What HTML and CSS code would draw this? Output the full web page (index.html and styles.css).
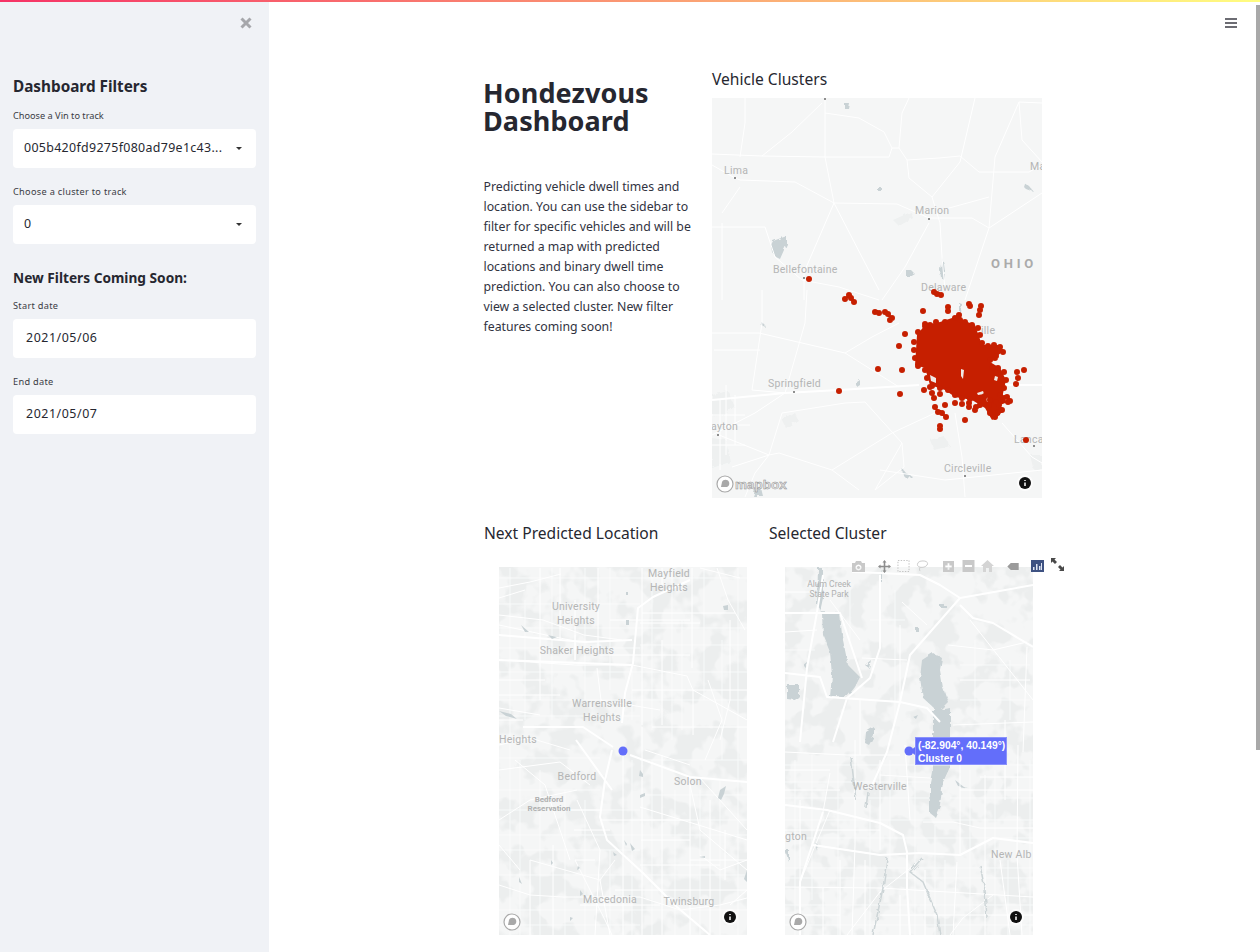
FILE: index.html
```html
<!DOCTYPE html>
<html lang="en">
<head>
<meta charset="utf-8">
<title>Hondezvous Dashboard</title>
<link rel="stylesheet" href="styles.css">
</head>
<body>
<svg class="defs" width="0" height="0">
  <defs>
    <filter id="mottle" x="0" y="0" width="100%" height="100%" color-interpolation-filters="sRGB">
      <feTurbulence type="fractalNoise" baseFrequency=".04" numOctaves="3" seed="7"/>
      <feColorMatrix type="matrix" values="0 0 0 0 .925  0 0 0 0 .933  0 0 0 0 .933  9 0 0 0 -4.300"/>
    </filter>
    <filter id="mottle2" x="0" y="0" width="100%" height="100%" color-interpolation-filters="sRGB">
      <feTurbulence type="fractalNoise" baseFrequency=".045" numOctaves="3" seed="21"/>
      <feColorMatrix type="matrix" values="0 0 0 0 .925  0 0 0 0 .933  0 0 0 0 .933  9 0 0 0 -4.400"/>
    </filter>
    <filter id="rough" x="-10%" y="-10%" width="120%" height="120%">
      <feTurbulence type="fractalNoise" baseFrequency=".18" numOctaves="2" seed="4" result="n"/>
      <feDisplacementMap in="SourceGraphic" in2="n" scale="5"/>
    </filter>
  </defs>
</svg>
<div class="topbar"></div>
<div class="app">
  <aside class="sidebar">
    <div class="close-row">
      <svg class="close" viewBox="0 0 12 12"><path d="M1.5 1.5l9 9M10.5 1.5l-9 9"/></svg>
    </div>
    <h3 class="side-head">Dashboard Filters</h3>
    <label class="field-label">Choose a Vin to track</label>
    <div class="select"><span>005b420fd9275f080ad79e1c43...</span><i class="caret"></i></div>
    <label class="field-label wide">Choose a cluster to track</label>
    <div class="select"><span>0</span><i class="caret"></i></div>
    <h3 class="side-head second">New Filters Coming Soon:</h3>
    <label class="field-label wide">Start date</label>
    <div class="date">2021/05/06</div>
    <label class="field-label wide">End date</label>
    <div class="date">2021/05/07</div>
  </aside>
  <main class="main">
    <svg class="menu" viewBox="0 0 12 10"><path d="M0 1h12M0 5h12M0 9h12"/></svg>
    <div class="scrollthumb"></div>
    <section class="row-one">
      <div class="intro">
        <h1>Hondezvous<br>Dashboard</h1>
        <p>Predicting vehicle dwell times and<br>location. You can use the sidebar to<br>filter for specific vehicles and will be<br>returned a map with predicted<br>locations and binary dwell time<br>prediction. You can also choose to<br>view a selected cluster. New filter<br>features coming soon!</p>
      </div>
      <div class="cluster-col">
        <h2>Vehicle Clusters</h2>
        <svg class="map map-large" viewBox="712 98 330 400">
          <rect class="land" x="712" y="98" width="330" height="400"/>
          <g class="patch rough">
            <path d="M893 220l18-8 2 6-14 8zM712 395l16-4 6 14-14 12-8-2zM930 440l14-4 6 10-16 4zM1030 455l12 0 0 14-8 2zM782 420l12-8 4 8-12 8zM712 438l14 2 4 22-18 6z"/>
          </g>
          <g class="water rough">
            <path d="M773 241l8-3 6-2 0 8-3 6-4 9-4-2-4-5-1-7zM906 270h5l3 3-5 3h-3zM942 258l2 6 1 8-1 8-3-2-1-8zM844 103h5l-1 5h-4zM878 187h3v4h-3zM1024 183l6 4 4 5-8-3-3-3zM761 322l4 3 1 3-5-3zM857 382l3-2 0 5-3 2zM902 468l4 5 6 3-4 4-5-5zM755 490l6-2 2 8h-10zM959 303l3 1-1 9-2 1z"/>
          </g>
          <g class="rd">
            <path d="M825 98V157L834 203L879 290M712 154L762 156L825 157L889 157L892 148H899L907 160L939 158L960 156L979 172L1029 172L1042 165M712 165L735 178L740 180L795 182L834 203L897 204L929 218L972 218L989 228L1042 193M745 98V123L740 157M762 156L792 132L822 103M825 113L859 118L884 132L892 148M899 148L902 113L909 98M907 160L909 178L932 197L940 223L942 257L945 290M932 197L960 162L975 98M712 227H765L775 257L802 280L839 287L879 300M722 223V300M740 187L722 213M804 270V300M929 223L905 267L882 300M989 228L995 157L1019 102L1042 103M1019 102L1022 140L1042 162M989 197L942 210M965 300L989 228M834 203L805 270"/>
            <path d="M712 333H759L845 353L872 337L899 323M845 353L899 387M785 393L805 323L807 290M785 393L752 390L762 323L762 290M712 435L755 413L785 393M719 435L769 455L779 453L832 470L859 490M769 455L782 413L845 403L865 402L902 443L875 490M769 455L732 467M769 455L755 473L745 497M832 470L892 433L935 413M902 443L904 467L875 490M955 413L962 457L965 497M1002 423L1032 457L1042 463M880 470L945 480L1042 470M714 350H760M720 400V470M706 415H745M726 385V455M735 395V445M712 425H750M712 445H745"/>
          </g>
          <g class="rd rd-wide">
            <path d="M712 400L785 393L839 390L919 385M1042 385H999"/>
          </g>
          <g class="town">
            <circle cx="735" cy="178" r="1"/><circle cx="929" cy="219" r="1"/><circle cx="804" cy="278" r="1"/><circle cx="794" cy="392" r="1"/><circle cx="718" cy="435" r="1"/><circle cx="965" cy="476" r="1"/><circle cx="825" cy="99" r="1"/><circle cx="1034" cy="446" r="1"/>
          </g>
          <g class="lbl">
            <text x="724" y="174">Lima</text>
            <text x="915" y="214">Marion</text>
            <text x="1030" y="170">Ma</text>
            <text x="773" y="273">Bellefontaine</text>
            <text x="921" y="291">Delaware</text>
            <text x="768" y="387">Springfield</text>
            <text x="711" y="430">ayton</text>
            <text x="944" y="472">Circleville</text>
            <text x="1014" y="443">Lancas</text>
            <text x="981" y="334">ille</text>
            <text class="state" x="991" y="268">OHIO</text>
          </g>
          <g class="dots">
            <path class="blob" d="M917 335L925 325L940 322L955 317L975 325L982 345L1000 345L1002 352L990 362L1000 368L1006 380L1002 398L1008 402L1000 405L1000 415L992 420L985 408L972 400L955 397L945 390L930 385L925 368L915 365Z"/>
            <path class="hole" d="M961 369l3 1-1 9-2-3zM930 375l6 3 0 5-5-2zM977 393l6-2 1 3-6 1zM986 396l5 5-4 1zM995 376l3 1-1 4-3-1z"/>
            <path class="dot" d="M809 279h0M849 295h0M845 299h0M854 302h0M851 298h0M875 312h0M879 313h0M885 312h0M888 314h0M892 318h0M890 320h0M905 334h0M899 346h0M878 369h0M902 370h0M839 391h0M900 394h0M923 311h0M925 324h0M948 307h0M948 311h0M969 304h0M970 306h0M980 310h0M979 315h0M981 306h0M959 315h0M934 292h0M937 294h0M941 295h0M940 394h0M930 387h0M932 393h0M924 390h0M934 398h0M935 407h0M945 405h0M942 413h0M946 417h0M938 412h0M940 429h0M940 426h0M965 420h0M955 403h0M962 404h0M969 403h0M969 407h0M975 410h0M976 407h0M989 405h0M999 405h0M990 413h0M995 417h0M1002 410h0M998 412h0M980 405h0M1024 370h0M1017 372h0M1018 378h0M1016 384h0M1010 401h0M1007 397h0M995 358h0M918 332h0M925 326h0M930 325h0M936 322h0M945 322h0M955 318h0M960 320h0M965 322h0M972 325h0M978 328h0M980 335h0M982 343h0M988 346h0M994 345h0M1000 347h0M1003 352h0M996 356h0M990 360h0M992 368h0M998 368h0M1004 372h0M1006 380h0M1004 388h0M1000 395h0M1003 398h0M1008 402h0M996 402h0M990 400h0M985 396h0M978 398h0M970 399h0M962 398h0M955 395h0M948 390h0M940 388h0M932 386h0M927 378h0M925 370h0M918 366h0M915 358h0M914 350h0M914 342h0"/>
          </g>
          <circle class="lead" cx="1026" cy="440" r="3"/>
          <g class="logo">
            <circle class="logo-ring" cx="725" cy="484" r="8"/>
            <path class="logo-mark" d="M721 487l1-5c1-3 6-3 7 0s-1 5-3 5z"/>
            <text class="logo-word" x="735" y="489">mapbox</text>
          </g>
          <circle class="info-halo" cx="1025" cy="483" r="8"/>
          <circle class="info" cx="1025" cy="483" r="6"/>
          <path class="info-i" d="M1025 480v1M1025 482.5v3.500"/>
        </svg>
      </div>
    </section>
    <section class="row-two">
      <div class="map-col">
        <h2>Next Predicted Location</h2>
        <svg class="map map-small" viewBox="499 567 248 368">
          <rect class="land" x="499" y="567" width="248" height="368"/>
          <rect x="499" y="567" width="248" height="368" class="mottle-a"/>
          <g class="rd rd-minor">
            <path d="M510 568V935M525 600V720M552 568V720M585 568V700M610 568V690M632 670V720M652 568V730M672 568V740M682 620V730M704 568V700M722 640V760M738 568V935M520 760V935M540 770V935M565 790V935M585 800V935M610 850V935M632 760V935M652 760V935M675 790V935M700 790V935M720 780V935M499 578H747M499 604H640M499 628H747M499 648H640M640 645H747M499 672H747M499 700H747M499 716H640M499 758H600M640 760H747M499 790H600M640 795H747M499 810H640M640 820H747M499 835H747M499 850H640M499 875H747M499 910H747M499 925H640"/>
          </g>
          <g class="rd">
            <path d="M499 588L530 582L561 574M499 598L525 590M499 615L543 620L584 635L622 640M499 625L560 638L580 642M499 660L575 665L632 665M499 680H545M499 695H560M499 708L540 715M499 720H523M540 568V700M560 568V640M575 600V660M598 568V650M597 668L601 700M642 568V725M662 568V590M662 640V725M692 568V668M717 568L728 600L745 630M730 620V700L720 740M700 568L740 578M642 613H735M610 620H690M600 655H690M632 665L687 676L693 690L747 720M632 690L747 690M652 727L747 727M600 700L660 710M575 635V660M640 623H700M693 690V735M708 680L722 720L705 760M499 745L530 738L570 750M499 770L560 762L590 785M515 760L545 785L570 860M499 820L530 800L577 790M530 860V935M553 845V935M577 800L600 850L595 935M574 830H610M575 860H595M623 750V935M642 727V935M662 755V935M690 777V935M690 860H747M641 840H690M640 865H720M615 890H747M580 905H660M689 780L700 830L747 870M699 777L747 830M640 807L747 840M575 860L605 920L612 935M615 860L600 880L610 935M499 885L530 895L563 897H640L680 910L720 905L747 898M530 860L600 880M700 855L720 870L747 860M645 750L690 765M600 820H690M710 800V935M725 830V880M560 810H600M499 845L520 870M730 905L747 890"/>
          </g>
          <g class="rd rd-wide">
            <path d="M690 580L653 597L638 608L633 663L625 693L622 723M499 635L585 642L632 640M499 660L632 665M523 727L583 727L613 747M612 750L605 780L600 817L607 840L643 873L677 907L710 935M630 755L690 777L747 782M576 740L612 790"/>
          </g>
          <g class="water">
            <path d="M723 606l5-1 0 5-4 0zM626 592l2 0 0 3-2 0zM626 620l3 0 0 5-3 0zM521 625l8 7-4 0zM548 635l9 2-5 2zM499 711l12 3 6 5-11-3zM640 770l3 4 0 3-4-1zM640 795l5-2 0 3-5 2zM720 790l6-4-2 8-3 6-3-2zM624 840l3 4-1 2zM630 843l5 6-3 2zM613 852l4 3-3 1zM551 860l2 3-2 2zM578 866l2 2-3 2zM699 857l6-1 0 2zM747 870v12l-3-3zM519 877l3 7-3-2zM580 890l3 4-3 2zM570 917l3 1-3 3z"/>
          </g>
          <g class="lbl">
            <text class="mid" x="669" y="577">Mayfield</text>
            <text class="mid" x="669" y="591">Heights</text>
            <text class="mid" x="576" y="610">University</text>
            <text class="mid" x="576" y="624">Heights</text>
            <text class="mid" x="577" y="654">Shaker Heights</text>
            <text class="mid" x="602" y="707">Warrensville</text>
            <text class="mid" x="602" y="721">Heights</text>
            <text x="499" y="743">Heights</text>
            <text class="mid" x="577" y="780">Bedford</text>
            <text class="mid small" x="549" y="802">Bedford</text>
            <text class="mid small" x="549" y="811">Reservation</text>
            <text class="mid" x="688" y="785">Solon</text>
            <text class="mid" x="610" y="903">Macedonia</text>
            <text class="mid" x="689" y="905">Twinsburg</text>
          </g>
          <circle class="pt" cx="623" cy="751" r="4.5"/>
          <circle class="logo-ring" cx="512" cy="922" r="8"/>
          <path class="logo-mark" d="M508 925l1-5c1-3 6-3 7 0s-1 5-3 5z"/>
          <circle class="info-halo" cx="730" cy="917" r="8"/>
          <circle class="info" cx="730" cy="917" r="6"/>
          <path class="info-i" d="M730 914v1M730 916.5v3.500"/>
        </svg>
      </div>
      <div class="map-col cluster-map">
        <h2>Selected Cluster</h2>
        <svg class="map map-small" viewBox="785 567 248 368">
          <rect class="land" x="785" y="567" width="248" height="368"/>
          <rect x="785" y="567" width="248" height="368" class="mottle-b"/>
          <g class="water rough">
            <path d="M818 568L823 568L823 598L820 612L840 613L842 635L848 665L860 677L855 687L847 697L830 697L832 675L830 652L823 635L822 613L817 605Z"/>
            <path d="M922 660L933 653L942 658L940 670L943 688L948 702L940 710L950 708L950 767L943 782L940 805L935 817L930 813L930 782L933 767L933 707L923 698L920 678Z"/>
            <path d="M787 685h12v11l-4 4-8-1zM866 732l8-5 0 9-5 9-4-2zM913 717l5-2-2 4zM882 568v14l-2 0zM936 744l8-6-2 6zM865 665l6-5-2 8zM803 665l4-3-1 6zM785 850l4 0 0 12zM815 843l3 0-1 8zM940 605l6 0 0 3-6 0zM915 627l3 0 0 4-3 0zM955 780l8 6 5 2-10-2z"/>
          </g>
          <g class="rd rd-minor">
            <path d="M795 760V935M812 755V900M838 760V935M870 800V935M890 760V860M915 740V935M935 825V935M945 860V935M970 770V935M995 770V935M1008 860V935M1030 760V935M785 765H1033M785 782H930M785 798H930M950 798H1033M785 820H1033M785 838H1033M785 868H1033M785 878H1033M785 905H1033M785 925H1033M850 580V640M895 590V720M975 640V720M1010 660V720M785 650H815M870 620H905M960 665H1030M960 700H1030"/>
          </g>
          <g class="rd">
            <path d="M785 632L817 630M902 602L927 625M948 645L993 650L1027 642M862 658L907 660M953 725L1033 722M880 823L903 835M855 845L852 935M813 845L880 855M830 773L823 812M923 822H953L980 828H1033M980 777H1033M930 778L880 775M785 752L847 755L900 755M957 862L953 935M785 887L880 888L1033 897M993 895L963 918L950 935M923 858L880 892L847 935M1018 745L1017 855L1022 935M823 887V935M785 770H830M785 790H840M785 830H880M830 810L800 882M855 740V845M880 760V850M905 745L910 820M960 740V855M985 775V935M1005 720V800M840 860V935M865 860V935M900 895V935M925 870V935M800 800V935M785 915H840M880 915H1033M960 790H1033M1000 860L1010 935M830 600L860 640M785 592H815M900 625V700M970 620L1033 700M960 680H1030M860 700V755M1027 647L1023 752"/>
          </g>
          <g class="rd rd-wide">
            <path d="M852 572L880 573L920 575L940 585L960 598L1033 585M960 598L910 655L900 702L887 752M960 605L973 618L993 623L1033 647M880 575L880 648L870 678L847 698L833 742M785 613H823H840L862 678M823 575L817 612L807 668L800 742M785 673L820 677L827 697L900 702L927 708L940 722M785 805L827 810L880 823L903 835L907 852L907 888L910 935M813 845L880 855L920 853L960 855L993 838L1033 843M823 812L800 882L800 935M887 752L870 790"/>
          </g>
          <g class="river rough">
            <path d="M868 792L866 808M887 858L883 888L873 935M922 858L910 872L923 882L937 915L940 935M980 865L985 890L987 918M851 757L856 800"/>
          </g>
          <g class="lbl">
            <text class="mid small light" x="829" y="587">Alum Creek</text>
            <text class="mid small light" x="829" y="597">State Park</text>
            <text class="mid" x="880" y="790">Westerville</text>
            <text x="785" y="840">gton</text>
            <text x="991" y="858">New Alb</text>
          </g>
          <circle class="logo-ring" cx="798" cy="922" r="8"/>
          <path class="logo-mark" d="M794 925l1-5c1-3 6-3 7 0s-1 5-3 5z"/>
          <circle class="info-halo" cx="1016" cy="917" r="8"/>
          <circle class="info" cx="1016" cy="917" r="6"/>
          <path class="info-i" d="M1016 914v1M1016 916.5v3.500"/>
          <circle class="pt" cx="909" cy="751" r="4.5"/>
        </svg>
        <div class="hover-tip">(-82.904°, 40.149°)<br>Cluster 0</div>
        <div class="modebar">
          <svg viewBox="0 0 13 12" class="mb-icon"><path d="M4 1h5l1 2h3v9H0V3h3zM6.500 4.500a3 3 0 1 0 .01 0zM6.500 6a1.500 1.500 0 1 1-.01 0z" fill-rule="evenodd"/></svg>
          <svg viewBox="0 0 13 13" class="mb-icon mb-dark"><path d="M6.500 0l2 2.500H7.300V5.700h3.200V4.500l2.500 2-2.500 2V7.300H7.300v3.200h1.200l-2 2.500-2-2.500h1.200V7.300H2.500v1.200L0 6.500l2.500-2v1.200h3.200V2.500H4.500z"/></svg>
          <svg viewBox="0 0 13 13" class="mb-icon mb-box"><rect x=".5" y=".5" width="12" height="12"/></svg>
          <svg viewBox="0 0 13 13" class="mb-icon mb-lasso"><path d="M1 5c0-3 3-4 6-4s5 1 5 3-3 4-6 4c-3 0-5-1-5-3zM4 8c-1 1-1 3 0 4"/></svg>
          <svg viewBox="0 0 12 12" class="mb-icon mb-gap"><path d="M0 0h12v12H0zM5 2.500v2.500H2.500v2H5v2.500h2V7h2.500V5H7V2.500z" fill-rule="evenodd"/></svg>
          <svg viewBox="0 0 12 12" class="mb-icon"><path d="M0 0h12v12H0zM2.500 5v2h7V5z" fill-rule="evenodd"/></svg>
          <svg viewBox="0 0 13 12" class="mb-icon mb-home"><path d="M6.500 0L13 6h-2v6H8V8H5v4H2V6H0z"/></svg>
          <svg viewBox="0 0 13 8" class="mb-icon mb-tag"><path d="M4 0h9v8H4L0 4z"/></svg>
          <span class="mb-logo"><svg viewBox="0 0 12 12"><path d="M2 7h1.500v3H2zM5 4h1.500v6H5zM8 6h1.500v4H8zM10 3h1v7h-1z"/></svg></span>
          <svg viewBox="0 0 13 13" class="mb-expand"><path d="M0 0h5L3.500 1.500 6 4 4 6 1.500 3.500 0 5zM13 13H8l1.500-1.500L7 9l2-2 2.500 2.500L13 8z"/></svg>
        </div>
      </div>
    </section>
  </main>
</div>
</body>
</html>
```
FILE: styles.css
```css
* { box-sizing: border-box; }
html, body { margin: 0; height: 952px; overflow: hidden; background: #fff; }
body { font-family: "Noto Sans", "Open Sans", sans-serif; color: #262730; }
.defs { position: absolute; }

.topbar { position: absolute; left: 0; top: 0; width: 100%; height: 2px; z-index: 5; background: linear-gradient(90deg, #f63366, #fffd80); }
.app { display: flex; height: 952px; }

.sidebar { width: 269px; flex: none; background: #f0f2f6; padding: 0 13px; }
.close-row { display: flex; justify-content: flex-end; height: 76px; padding: 17px 4px 0 0; }
.close { width: 12px; height: 12px; fill: none; stroke: #a6a7ab; stroke-width: 3; }
.side-head { margin: 0 0 14px; font-size: 15.300px; line-height: 20px; font-weight: 700; }
.side-head.second { margin: 24px 0 12px; font-size: 13.700px; }
.field-label { display: block; font-size: 9.200px; line-height: 12px; margin-bottom: 7px; color: #3a3b44; }
.field-label.wide { letter-spacing: .3px; }
.select, .date { background: #fff; height: 39px; border-radius: 4px; display: flex; align-items: center; font-size: 12.400px; margin-bottom: 18px; }
.select { padding: 0 13px 0 11px; justify-content: space-between; letter-spacing: .33px; }
.select span { white-space: nowrap; margin-top: -2px; }
.date { padding: 0 0 2px 13px; letter-spacing: .55px; }
.caret { width: 0; height: 0; border-left: 3.500px solid transparent; border-right: 3.500px solid transparent; border-top: 3.500px solid #333; margin-right: 1px; }

.main { flex: 1; position: relative; padding: 69px 0 0 215px; }
.menu { position: absolute; right: 23px; top: 18px; width: 12px; height: 10px; fill: none; stroke: #3c3d45; stroke-width: 1.500; }
.scrollthumb { position: absolute; right: 0; top: 5px; width: 4px; height: 745px; background: #a9a9a9; }

.row-one { display: grid; grid-template-columns: 208px 330px; column-gap: 20px; }
.intro h1 { margin: 10px 0 0 -1px; font-size: 27px; line-height: 27.500px; font-weight: 700; letter-spacing: .1px; }
.intro p { margin: 43px 0 0 -.5px; font-size: 12.300px; line-height: 20px; color: #31333f; white-space: nowrap; }
h2 { margin: 0; font-size: 15.600px; line-height: 20px; font-weight: 400; }
.cluster-col h2 { margin-bottom: 9px; }
.map { display: block; }
.map-large { width: 330px; height: 400px; }
.map-small { width: 248px; height: 368px; margin: 24px 0 0 15px; }
.cluster-map .map-small { margin-left: 16px; }

.row-two { display: grid; grid-template-columns: 285px 285px; margin-top: 25px; }
.cluster-map { position: relative; }

.land { fill: #f5f6f6; }
.mottle-a { filter: url(#mottle); }
.mottle-b { filter: url(#mottle2); }
.patch path { fill: #eef0f0; }
.water path { fill: #c9d2d5; }
.rough { filter: url(#rough); }
.rd { fill: none; stroke: #fff; stroke-width: 1; stroke-linejoin: round; }
.rd-wide { stroke-width: 2; }
.rd-minor { stroke-width: .8; stroke: #fbfcfc; }
.river { fill: none; stroke: #cdd5d7; stroke-width: 1.500; }
.town circle { fill: #6b6b6b; }
.lbl text { font-family: Roboto, "Noto Sans", sans-serif; font-size: 10.500px; fill: #b4b5b5; letter-spacing: .25px; }
.lbl .mid { text-anchor: middle; }
.lbl .small { font-size: 8px; font-weight: 700; letter-spacing: 0; fill: #b0b1b1; }
.lbl .light { font-size: 8.500px; font-weight: 400; }
.lbl .state { font-size: 13px; font-weight: 700; letter-spacing: 3.800px; fill: #ababab; }
.blob { fill: #c61f00; }
.hole { fill: #f0e9e5; }
.dot { fill: none; stroke: #c61f00; stroke-width: 6; stroke-linecap: round; }
.lead { fill: #c61f00; }
.logo-ring { fill: #fff; stroke: #a9a9a9; stroke-width: 1.200; }
.logo-mark { fill: #a9a9a9; }
.logo-word { font-family: "Liberation Sans", sans-serif; font-size: 13.500px; font-weight: 700; fill: #e6e6e6; stroke: #8f8f8f; stroke-width: .5; }
.info-halo { fill: #fff; opacity: .7; }
.info { fill: #111; }
.info-i { fill: none; stroke: #fff; stroke-width: 1.500; }
.pt { fill: #636efa; }

.hover-tip { position: absolute; left: 146px; top: 214px; width: 92px; height: 28px; background: #636efa; border: 1px solid #8a92fb; color: #fff; font-family: "Liberation Sans", sans-serif; font-size: 10.300px; font-weight: 700; line-height: 13px; padding: 1px 0 0 2px; white-space: nowrap; }
.hover-tip::before { content: ""; position: absolute; left: -6px; top: 9px; border-top: 4px solid transparent; border-bottom: 4px solid transparent; border-right: 5px solid #636efa; }

.modebar { position: absolute; left: 83px; top: 36px; display: flex; align-items: center; height: 14px; }
.mb-icon { width: 13px; height: 12px; fill: #c9c9c9; margin-right: 6px; flex: none; }
.mb-dark { fill: #8d8d8d; width: 13px; height: 13px; margin-left: 7px; }
.mb-box { fill: none; stroke: #bdbdbd; stroke-dasharray: 1.500 1.500; }
.mb-lasso { fill: none; stroke: #c9c9c9; stroke-width: 1; margin-right: 14px; }
.mb-gap { width: 11px; height: 11px; margin-right: 8px; }
.mb-home { fill: #d4d4d4; }
.mb-tag { width: 12px; height: 7px; margin: 0 12px 0 7px; fill: #9b9b9b; }
.mb-logo { width: 13px; height: 12px; background: #3e5282; flex: none; margin-right: 7px; display: block; }
.mb-logo svg { display: block; width: 12px; height: 12px; fill: #dfe5f2; }
.mb-expand { width: 13px; height: 13px; fill: #4a4a4a; flex: none; margin-top: -4px; }
```
